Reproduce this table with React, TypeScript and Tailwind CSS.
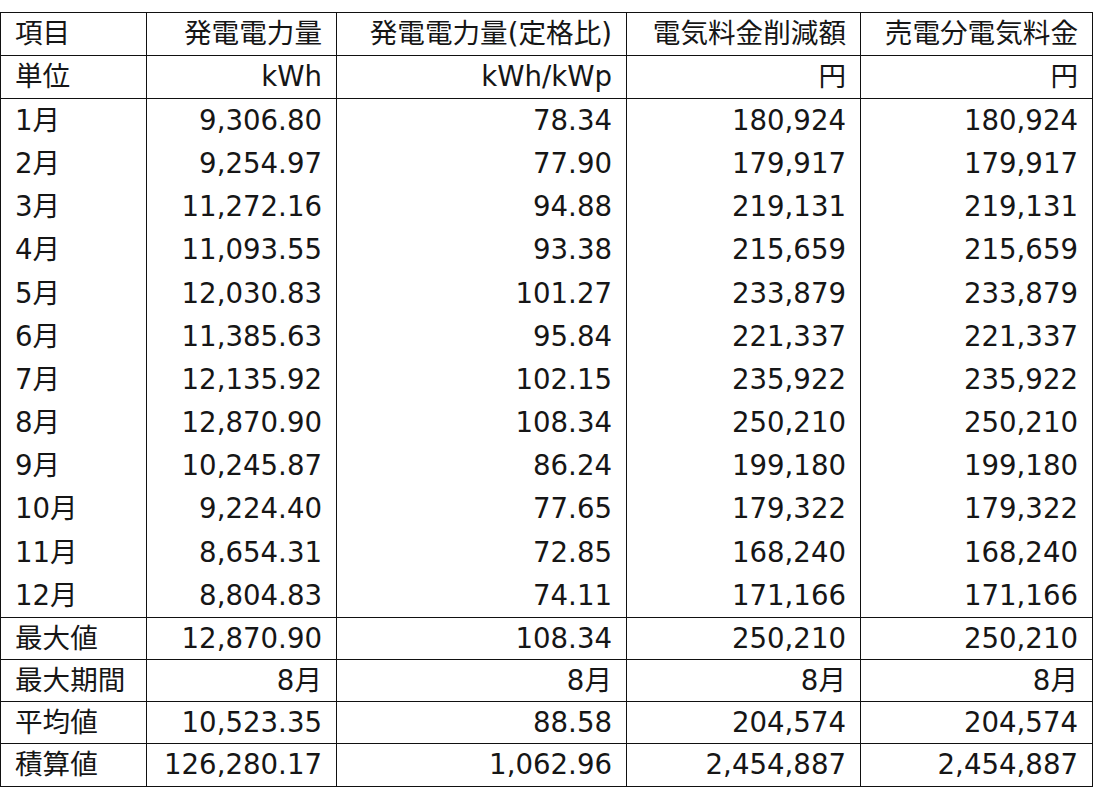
const headers = ["項目", "発電電力量", "発電電力量(定格比)", "電気料金削減額", "売電分電気料金"];
const units = ["単位", "kWh", "kWh/kWp", "円", "円"];

const months: string[][] = [
  ["1月", "9,306.80", "78.34", "180,924", "180,924"],
  ["2月", "9,254.97", "77.90", "179,917", "179,917"],
  ["3月", "11,272.16", "94.88", "219,131", "219,131"],
  ["4月", "11,093.55", "93.38", "215,659", "215,659"],
  ["5月", "12,030.83", "101.27", "233,879", "233,879"],
  ["6月", "11,385.63", "95.84", "221,337", "221,337"],
  ["7月", "12,135.92", "102.15", "235,922", "235,922"],
  ["8月", "12,870.90", "108.34", "250,210", "250,210"],
  ["9月", "10,245.87", "86.24", "199,180", "199,180"],
  ["10月", "9,224.40", "77.65", "179,322", "179,322"],
  ["11月", "8,654.31", "72.85", "168,240", "168,240"],
  ["12月", "8,804.83", "74.11", "171,166", "171,166"],
];

const summary: string[][] = [
  ["最大値", "12,870.90", "108.34", "250,210", "250,210"],
  ["最大期間", "8月", "8月", "8月", "8月"],
  ["平均値", "10,523.35", "88.58", "204,574", "204,574"],
  ["積算値", "126,280.17", "1,062.96", "2,454,887", "2,454,887"],
];

function Row({ cells, height, bottom }: { cells: string[]; height: string; bottom: boolean }) {
  return (
    <div
      className={`grid grid-cols-[145px_190px_290px_234px_1fr] ${height} ${bottom ? "border-b border-[#111]" : ""}`}
    >
      {cells.map((c, i) => (
        <div
          key={i}
          className={`flex items-center ${i === 0 ? "justify-start pl-[14px]" : "justify-end pr-[14px] border-l border-[#111]"}`}
        >
          {c}
        </div>
      ))}
    </div>
  );
}

export default function App() {
  return (
    <div className="min-h-screen bg-white pt-[12px] text-[#161616]">
      <div
        className="w-[1093px] border border-[#111] text-[27.6px] leading-none"
        style={{ fontFamily: '"DejaVu Sans", "Noto Sans CJK JP", sans-serif' }}
      >
        <Row cells={headers} height="h-[43px]" bottom />
        <Row cells={units} height="h-[43px]" bottom />
        <div className="border-b border-[#111]">
          {months.map((m, i) => (
            <Row key={i} cells={m} height="h-[43.2px]" bottom={false} />
          ))}
        </div>
        {summary.map((s, i) => (
          <Row key={i} cells={s} height="h-[42px]" bottom={i < summary.length - 1} />
        ))}
      </div>
    </div>
  );
}
